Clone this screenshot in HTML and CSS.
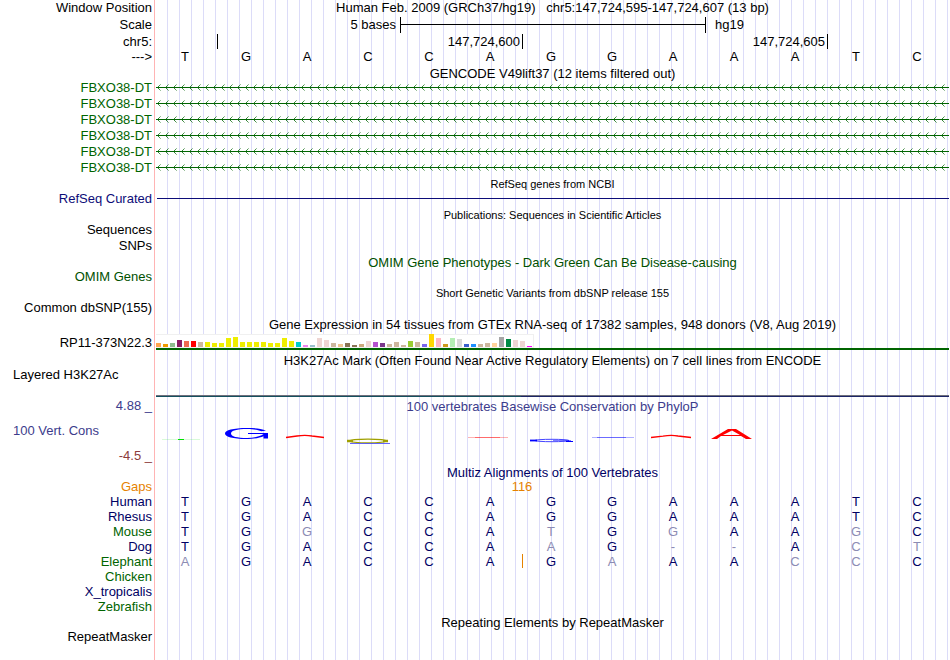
FILE: index.html
```
<!DOCTYPE html>
<html lang="en">
  <head>
    <meta charset="utf-8">
    <title>Genome Browser hg19 chr5:147,724,595-147,724,607</title>
    <link rel="stylesheet" href="styles.css">
  </head>
  <body>
    <!-- Shared pattern for the strand arrows -->
    <svg class="defs" width="0" height="0" aria-hidden="true">
      <defs>
        <pattern id="strand" width="8" height="16" patternUnits="userSpaceOnUse">
          <g fill="#006400" shape-rendering="crispEdges">
            <rect x="0" y="7" width="8" height="1"/>
            <rect x="2" y="6" width="1" height="3" opacity="0.8"/>
            <rect x="3" y="5" width="1" height="1" opacity="0.7"/>
            <rect x="3" y="9" width="1" height="1" opacity="0.7"/>
            <rect x="4" y="4" width="1" height="1" opacity="0.4"/>
            <rect x="4" y="10" width="1" height="1" opacity="0.4"/>
          </g>
        </pattern>
      </defs>
    </svg>

    <main class="browser">
      <!-- Base position -->
      <div class="row ruler">
        <div class="label">Window Position</div>
        <h1 class="data title">Human Feb. 2009 (GRCh37/hg19) &nbsp; chr5:147,724,595-147,724,607 (13 bp)</h1>
      </div>
      <div class="row ruler">
        <div class="label">Scale</div>
        <div class="data bases">
          <span class="scale-size">5 bases</span>
          <span class="scale-bar"></span>
          <span class="scale-db">hg19</span>
        </div>
      </div>
      <div class="row ticks">
        <div class="label">chr5:</div>
        <div class="data bases">
          <span class="tick"></span>
          <span class="tick wide">147,724,600</span>
          <span class="tick wide">147,724,605</span>
        </div>
      </div>
      <div class="row ruler">
        <div class="label">---&gt;</div>
        <div class="data bases seq"><span>T</span><span>G</span><span>A</span><span>C</span><span>C</span><span>A</span><span>G</span><span>G</span><span>A</span><span>A</span><span>A</span><span>T</span><span>C</span></div>
      </div>

      <!-- GENCODE -->
      <div class="row tight"><h2 class="data title">GENCODE V49lift37 (12 items filtered out)</h2></div>
      <div class="row green"><div class="label">FBXO38-DT</div><svg class="data gene"><rect width="100%" height="16" fill="url(#strand)"/></svg></div>
      <div class="row green"><div class="label">FBXO38-DT</div><svg class="data gene"><rect width="100%" height="16" fill="url(#strand)"/></svg></div>
      <div class="row green"><div class="label">FBXO38-DT</div><svg class="data gene"><rect width="100%" height="16" fill="url(#strand)"/></svg></div>
      <div class="row green"><div class="label">FBXO38-DT</div><svg class="data gene"><rect width="100%" height="16" fill="url(#strand)"/></svg></div>
      <div class="row green"><div class="label">FBXO38-DT</div><svg class="data gene"><rect width="100%" height="16" fill="url(#strand)"/></svg></div>
      <div class="row green"><div class="label">FBXO38-DT</div><svg class="data gene"><rect width="100%" height="16" fill="url(#strand)"/></svg></div>

      <!-- RefSeq, publications, variants -->
      <div class="row"><h2 class="data title low small">RefSeq genes from NCBI</h2></div>
      <div class="row refseq"><div class="label">RefSeq Curated</div><div class="data"><div class="refseq-line"></div></div></div>
      <div class="row"><h2 class="data title low small">Publications: Sequences in Scientific Articles</h2></div>
      <div class="row"><div class="label">Sequences</div></div>
      <div class="row"><div class="label">SNPs</div></div>
      <div class="row omim"><h2 class="data title low">OMIM Gene Phenotypes - Dark Green Can Be Disease-causing</h2></div>
      <div class="row omim"><div class="label">OMIM Genes</div></div>
      <div class="row"><h2 class="data title low small">Short Genetic Variants from dbSNP release 155</h2></div>
      <div class="row"><div class="label">Common dbSNP(155)</div></div>

      <!-- GTEx -->
      <div class="row"><h2 class="data title low">Gene Expression in 54 tissues from GTEx RNA-seq of 17382 samples, 948 donors (V8, Aug 2019)</h2></div>
      <div class="row gtex">
        <div class="label">RP11-373N22.3</div>
        <div class="data gtex-data">
          <div class="bars">
            <i style="height:4px;background:#ffa54f"></i>
            <i style="height:3px;background:#ee9a00"></i>
            <i style="height:4px;background:#8fbc8f"></i>
            <i style="height:7px;background:#8b1c62"></i>
            <i style="height:6px;background:#ee6a50"></i>
            <i style="height:6px;background:#ff0000"></i>
            <i style="height:5px;background:#cdb79e"></i>
            <i style="height:5px;background:#eeee00"></i>
            <i style="height:4px;background:#eeee00"></i>
            <i style="height:4px;background:#eeee00"></i>
            <i style="height:9px;background:#eeee00"></i>
            <i style="height:10px;background:#eeee00"></i>
            <i style="height:5px;background:#eeee00"></i>
            <i style="height:5px;background:#eeee00"></i>
            <i style="height:5px;background:#eeee00"></i>
            <i style="height:5px;background:#eeee00"></i>
            <i style="height:4px;background:#eeee00"></i>
            <i style="height:4px;background:#eeee00"></i>
            <i style="height:9px;background:#eeee00"></i>
            <i style="height:6px;background:#eeee00"></i>
            <i style="height:5px;background:#00cdcd"></i>
            <i style="height:2px;background:#ee82ee"></i>
            <i style="height:2px;background:#9ac0cd"></i>
            <i style="height:9px;background:#eed5d2"></i>
            <i style="height:7px;background:#eed5d2"></i>
            <i style="height:4px;background:#cdb79e"></i>
            <i style="height:3px;background:#eec591"></i>
            <i style="height:4px;background:#8b7355"></i>
            <i style="height:2px;background:#8b7355"></i>
            <i style="height:3px;background:#cdaa7d"></i>
            <i style="height:6px;background:#eed5d2"></i>
            <i style="height:5px;background:#b452cd"></i>
            <i style="height:4px;background:#7a378b"></i>
            <i style="height:3px;background:#cdb79e"></i>
            <i style="height:5px;background:#cdb79e"></i>
            <i style="height:2px;background:#cdb79e"></i>
            <i style="height:6px;background:#9acd32"></i>
            <i style="height:5px;background:#cdb79e"></i>
            <i style="height:3px;background:#7a67ee"></i>
            <i style="height:13px;background:#ffd700"></i>
            <i style="height:9px;background:#ffb6c1"></i>
            <i style="height:3px;background:#cd9b1d"></i>
            <i style="height:9px;background:#b4eeb4"></i>
            <i style="height:8px;background:#d9d9d9"></i>
            <i style="height:3px;background:#3a5fcd"></i>
            <i style="height:3px;background:#1e90ff"></i>
            <i style="height:3px;background:#cdb79e"></i>
            <i style="height:4px;background:#cdb79e"></i>
            <i style="height:4px;background:#ffd39b"></i>
            <i style="height:10px;background:#a6a6a6"></i>
            <i style="height:8px;background:#008b45"></i>
            <i style="height:7px;background:#eed5d2"></i>
            <i style="height:6px;background:#eed5d2"></i>
            <i style="height:1px;background:#ff00ff"></i>
          </div>
        </div>
      </div>

      <!-- H3K27Ac -->
      <div class="row"><h2 class="data title">H3K27Ac Mark (Often Found Near Active Regulatory Elements) on 7 cell lines from ENCODE</h2></div>
      <div class="row layered">
        <div class="label left">Layered H3K27Ac</div>
        <div class="data layered-data"></div>
      </div>

      <!-- Conservation -->
      <div class="row cons">
        <div class="label cons-labels">
          <span>4.88 _</span>
          <span class="left">100 Vert. Cons</span>
          <span class="min">-4.5 _</span>
        </div>
        <div class="data">
          <h2 class="title low">100 vertebrates Basewise Conservation by PhyloP</h2>
          <svg class="logo" viewBox="156 413 793 40" role="img" aria-label="PhyloP scores">
            <g fill="none">
              <path d="M162 439.5H200" stroke="#00e000" stroke-opacity="0.15"/>
              <path d="M178 439.5H184" stroke="#00e000"/>
              <path d="M266 430.500C261 428.500 254 428 247 428C233 428 225 430.300 225 433.500C225 436.700 233 439 246 439C254 439 260 437.800 263.500 436.200V438.500H268V433H248V434H263.500C260 436.500 254 438 247 438C237 438 231 436.500 231 433.500C231 430.500 237 429 247 429C254 429 258 430 261.500 431.300Z" fill="#0000ff"/>
              <path d="M286 437.500L297 436Q305 434.800 312 436L324 437.500" stroke="#ff0000" stroke-width="1.300"/>
              <g stroke="#a0a000">
                <ellipse cx="368" cy="441" rx="18" ry="1.800" stroke-width="1.200"/>
                <path d="M347 441H353M383 441H388" stroke-width="2.400"/>
              </g>
              <path d="M350 443.500H390" stroke="#4040ff" stroke-opacity="0.8"/>
              <path d="M468 437.500H508" stroke="#ff0000" stroke-opacity="0.3"/>
              <path d="M475 437.500H500" stroke="#ff0000" stroke-opacity="0.4"/>
              <ellipse cx="552" cy="440.500" rx="17" ry="1.200" stroke="#3030ff" stroke-width="0.900"/>
              <path d="M530 440.500H537" stroke="#0000ff" stroke-width="1.800"/>
              <path d="M553 440.500H571" stroke="#0000ff" stroke-opacity="0.5"/>
              <path d="M566 441.500H573" stroke="#0000ff"/>
              <path d="M592 437.500H634" stroke="#0000ff" stroke-opacity="0.3"/>
              <path d="M597 437.500H626" stroke="#0000ff" stroke-opacity="0.4"/>
              <path d="M651 437.500L663 436.200Q671 434.800 678 436L691 437.500" stroke="#ff0000" stroke-width="1.300"/>
              <path d="M711 439L728 429H736L752 439H746L741 436H721L717 439ZM723 435H740L732 430.500Z" fill="#ff0000" fill-rule="evenodd"/>
            </g>
          </svg>
        </div>
      </div>

      <!-- Multiz alignments -->
      <div class="row tight navy"><h2 class="data title">Multiz Alignments of 100 Vertebrates</h2></div>
      <div class="row species gaps"><div class="label">Gaps</div><div class="data bases"><span class="gap-size">116</span></div></div>
      <div class="row species navy"><div class="label">Human</div><div class="data bases seq"><span>T</span><span>G</span><span>A</span><span>C</span><span>C</span><span>A</span><span>G</span><span>G</span><span>A</span><span>A</span><span>A</span><span>T</span><span>C</span></div></div>
      <div class="row species navy"><div class="label">Rhesus</div><div class="data bases seq"><span>T</span><span>G</span><span>A</span><span>C</span><span>C</span><span>A</span><span>G</span><span>G</span><span>A</span><span>A</span><span>A</span><span>T</span><span>C</span></div></div>
      <div class="row species green"><div class="label">Mouse</div><div class="data bases seq navy"><span>T</span><span>G</span><span class="diff">G</span><span>C</span><span>C</span><span>A</span><span class="diff">T</span><span>G</span><span class="diff">G</span><span>A</span><span>A</span><span class="diff">G</span><span>C</span></div></div>
      <div class="row species navy"><div class="label">Dog</div><div class="data bases seq"><span>T</span><span>G</span><span>A</span><span>C</span><span>C</span><span>A</span><span class="diff">A</span><span>G</span><span class="diff">-</span><span class="diff">-</span><span>A</span><span class="diff">C</span><span class="diff">T</span></div></div>
      <div class="row species green"><div class="label">Elephant</div><div class="data bases seq navy"><span class="diff">A</span><span>G</span><span>A</span><span>C</span><span>C</span><span>A</span><span class="insert">G</span><span class="diff">A</span><span>A</span><span>A</span><span class="diff">C</span><span class="diff">C</span><span>C</span></div></div>
      <div class="row species green"><div class="label">Chicken</div></div>
      <div class="row species navy"><div class="label">X_tropicalis</div></div>
      <div class="row species green"><div class="label">Zebrafish</div></div>

      <!-- RepeatMasker -->
      <div class="row"><h2 class="data title low">Repeating Elements by RepeatMasker</h2></div>
      <div class="row"><div class="label">RepeatMasker</div></div>
    </main>
  </body>
</html>
```

FILE: styles.css
```
* {
  box-sizing: border-box;
}

body {
  margin: 0 1px 0 0;
  background: #fff;
  color: #000;
  font-family: "Liberation Sans", Arial, sans-serif;
  font-size: 13px;
  line-height: 16px;
}

.defs {
  display: block;
}

/* Red divider after the labels, blue guide lines behind the data */
.browser {
  min-height: 100vh;
  background:
    linear-gradient(#ffb4b4, #ffb4b4) 154px 0 / 1px 100% no-repeat,
    linear-gradient(#fff, #fff) 0 0 / 156px 100% no-repeat,
    repeating-linear-gradient(to right, transparent 0 11px, #dcdcf8 11px 12px);
}

.row {
  display: grid;
  grid-template-columns: 156px minmax(0, 1fr);
}

.label {
  padding-right: 4px;
  text-align: right;
  white-space: nowrap;
}

.label.left {
  padding-left: 13px;
  text-align: left;
}

.data {
  grid-column: 2;
}

.title {
  margin: 0;
  font-size: 13px;
  font-weight: normal;
  line-height: 15px;
  text-align: center;
  white-space: nowrap;
}

.title.low {
  height: 15px;
  line-height: 17px;
}

.small {
  font-size: 11px;
}

/* One column for each base in the window */
.bases {
  display: grid;
  grid-template-columns: repeat(13, minmax(0, 1fr));
}

.seq span {
  padding-right: 3px;
  text-align: center;
}

/* Ruler */
.ruler {
  padding-bottom: 1px;
}

.scale-size {
  grid-column: 1 / 5;
  padding-right: 4px;
  text-align: right;
}

.scale-bar {
  grid-column: 5 / 10;
  margin: 0 -1px 0 0;
  border: solid #000;
  border-width: 0 1px;
  background: linear-gradient(#000, #000) 0 7px / 100% 1px no-repeat;
}

.scale-db {
  grid-column: 10 / 12;
  padding-left: 10px;
}

.ticks {
  line-height: 15px;
}

.tick {
  margin-right: -1px;
  padding-right: 2px;
  border-right: 1px solid #000;
  text-align: right;
}

.tick.wide {
  grid-column: span 5;
}

/* Genes */
.tight {
  height: 14px;
}

.green {
  color: #006400;
}

.navy {
  color: #000064;
}

.gene {
  display: block;
  width: 100%;
  height: 16px;
}

.refseq {
  color: #0c0c78;
}

.refseq-line {
  height: 8px;
  margin-left: 1px;
  border-bottom: 1px solid #0c0c78;
}

.omim {
  color: #005000;
}

/* GTEx bar chart */
.gtex {
  margin: 3px 0;
}

.gtex .label {
  line-height: 18px;
  height: 16px;
}

.gtex-data {
  border-bottom: 2px solid #006400;
}

.bars {
  display: flex;
  align-items: flex-end;
  gap: 2px;
  width: 378px;
  height: 14px;
  border: solid #f0f0f0;
  border-width: 1px 1px 1px 0;
  background: #fff;
}

.bars i {
  flex: none;
  width: 5px;
}

/* Layered H3K27Ac */
.layered {
  height: 29px;
  line-height: 14px;
}

.layered-data {
  background:
    linear-gradient(#70707c, #70707c) 0 27px / 100% 1px no-repeat,
    linear-gradient(to right, #14505f 46%, #1c2566 46%) 0 28px / 100% 1px no-repeat;
}

/* Conservation */
.cons {
  padding: 1px 0;
  color: #3c3c8c;
}

.cons-labels {
  display: flex;
  flex-direction: column;
  gap: 9px;
}

.cons-labels .left {
  padding-left: 13px;
  text-align: left;
}

.cons-labels .min {
  color: #8c3c3c;
}

.logo {
  display: block;
  width: 100%;
}

/* Alignments */
.species {
  line-height: 15px;
}

.gaps {
  color: #e68200;
}

.gap-size {
  grid-column: 6 / 8;
  text-align: center;
}

.diff {
  color: #8c8cb4;
}

.insert {
  background: linear-gradient(#e68200, #e68200) 0 0 / 1px 14px no-repeat;
}
```
